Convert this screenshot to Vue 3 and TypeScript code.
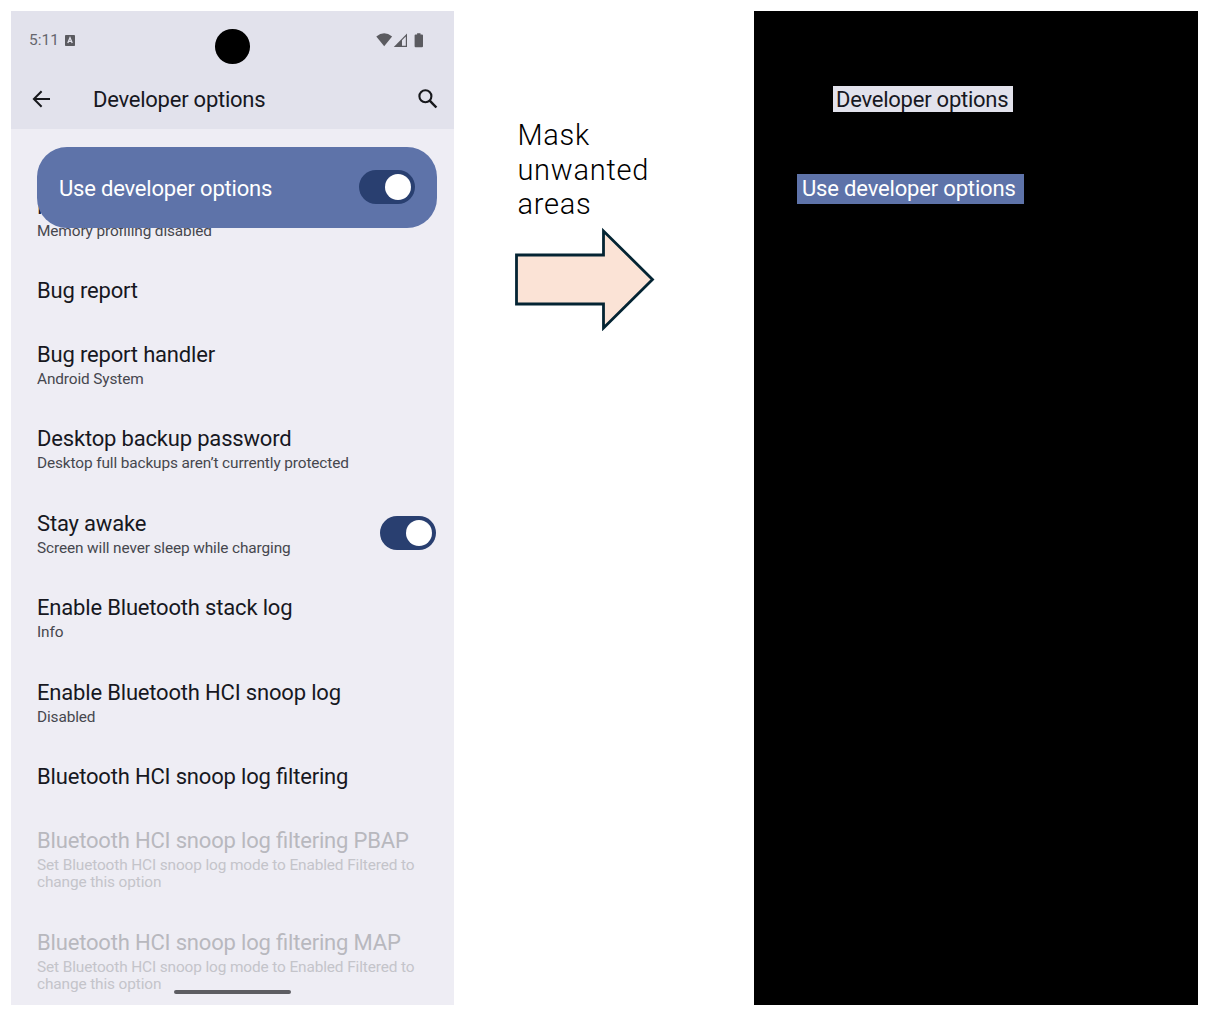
<script setup lang="ts">
interface Option {
  title: string
  summary?: string
  on?: boolean
  disabled?: boolean
}

const filteredHint = 'Set Bluetooth HCI snoop log mode to Enabled Filtered to change this option'

const options: Option[] = [
  { title: 'Memory', summary: 'Memory profiling disabled' },
  { title: 'Bug report' },
  { title: 'Bug report handler', summary: 'Android System' },
  { title: 'Desktop backup password', summary: 'Desktop full backups aren’t currently protected' },
  { title: 'Stay awake', summary: 'Screen will never sleep while charging', on: true },
  { title: 'Enable Bluetooth stack log', summary: 'Info' },
  { title: 'Enable Bluetooth HCI snoop log', summary: 'Disabled' },
  { title: 'Bluetooth HCI snoop log filtering' },
  { title: 'Bluetooth HCI snoop log filtering PBAP', summary: filteredHint, disabled: true },
  { title: 'Bluetooth HCI snoop log filtering MAP', summary: filteredHint, disabled: true },
]
</script>

<template>
  <main class="board">
    <section class="phone">
      <header class="top">
        <div class="status">
          <span class="clock">5:11</span>
          <svg class="badge-a" width="10" height="11" viewBox="0 0 10 11">
            <rect width="10" height="11" rx="0.8" fill="#5b5b60" />
            <path d="M2.8 8 5 2.6 7.2 8M3.6 6.4h2.8" fill="none" stroke="#e2e2ec" stroke-width="1.3" />
          </svg>
          <svg class="signals" width="48" height="15" viewBox="0 0 48 15">
            <path d="M0.3 3.4Q8.2-2.8 16.1 3.4L8.2 13.2Z" fill="#5b5b60" />
            <path d="M17.8 14 31 0.6V14Z" fill="#5b5b60" />
            <path d="M26 7.2 29.8 3.4V12.8H26Z" fill="#e2e2ec" />
            <path d="M39.6 1.4h1.5V0.2h3.4v1.2h1.5q1 0 1 1v10.8q0 1-1 1h-6.4q-1 0-1-1V2.4q0-1 1-1Z" fill="#5b5b60" />
          </svg>
        </div>
        <div class="appbar">
          <svg class="back" width="18" height="18" viewBox="0 0 18 18">
            <path d="M9.6 1.2 1.9 9l7.7 7.8M1.9 9H18" fill="none" stroke="#17181c" stroke-width="2" />
          </svg>
          <h1>Developer options</h1>
          <svg class="search" width="20" height="20" viewBox="0 0 20 20">
            <circle cx="7.4" cy="7.3" r="6" fill="none" stroke="#17181c" stroke-width="2.1" />
            <path d="m11.7 11.6 6.7 6.9" stroke="#17181c" stroke-width="2.5" />
          </svg>
        </div>
        <i class="camera"></i>
      </header>

      <ul class="list">
        <li v-for="o in options" :key="o.title" :class="{ disabled: o.disabled }">
          <div class="copy">
            <h2>{{ o.title }}</h2>
            <p v-if="o.summary">{{ o.summary }}</p>
          </div>
          <span v-if="o.on" class="switch"><i></i></span>
        </li>
      </ul>

      <div class="master">
        <span>Use developer options</span>
        <span class="switch"><i></i></span>
      </div>
      <div class="gesture"></div>
    </section>

    <section class="step">
      <p>Mask<br />unwanted<br />areas</p>
      <svg width="142" height="104" viewBox="0 0 142 104">
        <path d="M2.5 28H89.5V4L138.5 52.5 89.5 101V77H2.5Z" fill="#fbe3d6" stroke="#042433" stroke-width="2.8" />
      </svg>
    </section>

    <section class="masked">
      <span class="crop title">Developer options</span>
      <span class="crop main">Use developer options</span>
    </section>
  </main>
</template>

<style>
body {
  margin: 0;
  background: #fff;
}
</style>

<style scoped>
.board {
  box-sizing: border-box;
  width: 1210px;
  height: 1021px;
  padding: 11px 12px 16px 11px;
  display: flex;
  overflow: hidden;
  font-family: Roboto, sans-serif;
  font-feature-settings: 'liga' 1;
}
h1, h2, p, ul {
  margin: 0;
  padding: 0;
  font-weight: 400;
}
.phone {
  position: relative;
  flex: none;
  width: 443px;
  height: 994px;
  overflow: hidden;
  background: #eeedf4;
  color: #17181f;
}
.top {
  position: relative;
  height: 118.4px;
  background: #e2e2ec;
}
.status {
  display: flex;
  align-items: center;
  height: 58px;
  padding: 0 30px 0 18px;
  color: #66666c;
}
.clock {
  font-size: 15.5px;
}
.badge-a {
  margin-left: 6px;
}
.signals {
  margin-left: auto;
}
.appbar {
  display: flex;
  align-items: center;
  height: 61px;
  padding: 0 16.5px 0 21px;
}
.back,
.search {
  margin-bottom: 1.2px;
}
h1 {
  flex: 1;
  margin-left: 43px;
  padding-top: 1px;
  font-size: 22px;
  line-height: 26px;
  letter-spacing: -0.24px;
  white-space: nowrap;
}
.camera {
  position: absolute;
  left: 204px;
  top: 18px;
  width: 34.6px;
  height: 34.6px;
  border-radius: 50%;
  background: #000;
}
.list {
  margin-top: 45.8px;
  list-style: none;
}
li {
  display: flex;
  align-items: center;
  justify-content: space-between;
  padding: 18.8px 18px 18.8px 26px;
}
h2 {
  font-size: 22px;
  line-height: 26px;
  letter-spacing: -0.18px;
  white-space: nowrap;
}
.copy p {
  margin-top: 3.1px;
  max-width: 390px;
  font-size: 15.4px;
  line-height: 17.7px;
  letter-spacing: -0.12px;
  color: #46474e;
}
.disabled h2 {
  color: #b8b8be;
}
.disabled p {
  color: #c4c4ca;
}
.switch {
  flex: none;
  box-sizing: border-box;
  display: flex;
  justify-content: flex-end;
  width: 56px;
  height: 34px;
  padding: 4px;
  border-radius: 17px;
  background: #293f70;
}
.switch i {
  width: 26px;
  height: 26px;
  border-radius: 50%;
  background: #fff;
}
li .switch {
  width: 56.4px;
  margin: -3px -0.4px 0 0;
}
.master {
  position: absolute;
  left: 26px;
  top: 136px;
  box-sizing: border-box;
  display: flex;
  align-items: center;
  justify-content: space-between;
  width: 399.6px;
  height: 80.5px;
  padding: 0 21.6px 0 22px;
  border-radius: 30px;
  background: #5e73a9;
  color: #fff;
  font-size: 22px;
  letter-spacing: -0.19px;
}
.master > span:first-child {
  padding-top: 2px;
}
.master .switch {
  margin-top: -1px;
}
.gesture {
  position: absolute;
  left: 163px;
  top: 979px;
  width: 117px;
  height: 4px;
  border-radius: 2px;
  background: #5d5d62;
}
.step {
  flex: none;
  width: 300px;
  padding-top: 107px;
}
.step p {
  margin-left: 63.4px;
  font-size: 29px;
  line-height: 34.6px;
  font-weight: 300;
  letter-spacing: 0.75px;
  color: #000;
}
.step svg {
  display: block;
  margin: 5px 0 0 60px;
}
.masked {
  flex: none;
  display: flex;
  flex-direction: column;
  align-items: flex-start;
  width: 444px;
  height: 994px;
  background: #000;
}
.crop {
  box-sizing: border-box;
  font-size: 22px;
  line-height: 27px;
  letter-spacing: -0.24px;
  white-space: nowrap;
}
.title {
  width: 180px;
  height: 26px;
  margin: 75px 0 0 79px;
  padding-left: 3px;
  background: #e2e2ec;
  color: #17181f;
}
.main {
  width: 227px;
  height: 30px;
  margin: 62px 0 0 43px;
  padding-left: 5px;
  line-height: 30px;
  letter-spacing: -0.17px;
  background: #5e73a9;
  color: #fff;
}
</style>
